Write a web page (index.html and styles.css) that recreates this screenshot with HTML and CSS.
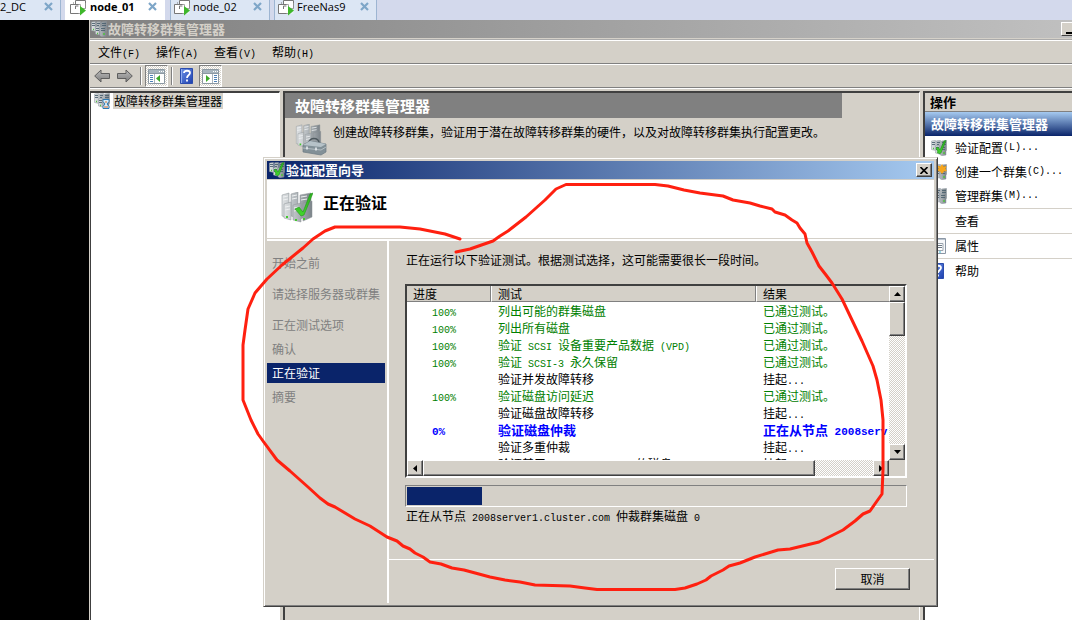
FILE: index.html
```html
<!DOCTYPE html>
<html lang="zh-CN">
<head>
<meta charset="utf-8">
<title>故障转移群集管理器</title>
<link rel="stylesheet" href="styles.css">
</head>
<body>
<svg class="defs" aria-hidden="true">
  <defs>
    <linearGradient id="metal" x1="0" x2="1" y1="0" y2="0"><stop offset="0" stop-color="#dfe2e4"/><stop offset=".5" stop-color="#b0b6ba"/><stop offset="1" stop-color="#7b8389"/></linearGradient>
    <linearGradient id="greenTick" x1="0" x2="0" y1="0" y2="1"><stop offset="0" stop-color="#2fae22"/><stop offset="1" stop-color="#43d62c"/></linearGradient>
    <linearGradient id="blueBook" x1="0" x2="1" y1="0" y2="1"><stop offset="0" stop-color="#6d92e8"/><stop offset="1" stop-color="#1c3fae"/></linearGradient>
    <linearGradient id="arrowFill" x1="0" x2="0" y1="0" y2="1"><stop offset="0" stop-color="#bdbdbd"/><stop offset="1" stop-color="#7c7c7c"/></linearGradient>
    <symbol id="servers" viewBox="0 0 16 16">
      <g fill="url(#metal)" stroke="#8c979e" stroke-width=".5">
        <path d="M.5 1l4-.6v10l-4-.9zM5.500.8l4-.4v10l-4-.6zM10.500 1l5-.6v10l-5 .4z"/>
        <path d="M4.500 6l4-.6V14l-4-1zM9 6l6-.6v9.600l-4 .7-2-1z"/>
      </g>
      <path d="M1 2.500h3M1 4.500h3M6 2.500h3M6 4.500h2M11 2.500h4M11 4.500h4M5 7.500h3M5 9.500h3M10 7.500h4M10 9.500h4" stroke="#4d6270" stroke-width=".9"/>
      <path d="M2 8.500h1M6 12.500h1M12 13h2" stroke="#4fc43d" stroke-width="1.400"/>
    </symbol>
    <symbol id="servers-check" viewBox="0 0 16 16">
      <use href="#servers" width="16" height="16"/>
      <path d="M5 8l2-1 2 3 4-9 2-.6-5 12.600-2 1z" fill="url(#greenTick)" stroke="#168a19" stroke-width=".5"/>
    </symbol>
    <symbol id="servers-large" viewBox="0 0 32 32">
      <g fill="url(#metal)" stroke="#8b9195" stroke-width=".5">
        <path d="M1 3l7-2v25l-7-2zM10 2l7-2v26l-7-2zM19 3l11-2v22l-11 4z"/>
        <path d="M3 12l7-2v18l-7-2zM12 13l8-2v19l-8-2zM22 11l9-2v16l-9 4z"/>
      </g>
      <path d="M2 5l5-1M2 8l5-1M11 4l5-1M11 7l5-1M20 5l6-1M20 8l6-1M4 15l5-1M4 18l5-1M13 16l5-1M13 19l5-1" stroke="#eef0f1"/>
      <path d="M5 25h2M14 28h2M22 27h2" stroke="#43c82f" stroke-width="2"/>
    </symbol>
    <symbol id="vm" viewBox="0 0 16 16">
      <g fill="#fff" stroke="#777" stroke-width="1">
        <path d="M5.500.5h10v8h-10z"/><path d="M.5 4.500h10v9H.5z"/><path d="M3.500 3.500V2.500M5.500 9v-3h3" fill="none"/>
      </g>
      <path d="M8.500 3h7v11h-7z" fill="#fff" opacity=".35"/>
      <path d="M10 6l6 4.500-6 5z" fill="#3eb72b"/>
    </symbol>
    <symbol id="close-x" viewBox="0 0 9 9"><path d="M1 1l7 7M8 1L1 8" stroke="#7ea6c8" stroke-width="2.200"/></symbol>
    <symbol id="help" viewBox="0 0 13 16">
      <path d="M.5.5h12v15H.5z" fill="url(#blueBook)" stroke="#2b4cae"/><path d="M1.500 1v14" stroke="#90adf0"/>
      <path d="M4 5c0-3 6-3 6 0 0 2-3 2-3 5M7 11.500v2" fill="none" stroke="#fff" stroke-width="1.800"/>
    </symbol>
    <symbol id="pane" viewBox="0 0 17 15">
      <path d="M.5.5h16v14H.5z" fill="#fff" stroke="#8c99a3"/><path d="M1 1h15v3H1z" fill="#a8b5be"/><path d="M1 4.500h15" stroke="#8c99a3"/>
      <path d="M11 2.500h1M13 2.500h1M15 2.500h1" stroke="#fff"/>
    </symbol>
  </defs>
</svg>

<nav class="tabs">
  <div class="tab tab-cut"><span>2_DC</span><button class="tab-close" aria-label="关闭 2_DC"><svg><use href="#close-x"/></svg></button></div>
  <div class="tab tab-active"><svg class="vm"><use href="#vm"/></svg><span>node_01</span><button class="tab-close" aria-label="关闭 node_01"><svg><use href="#close-x"/></svg></button></div>
  <div class="tab tab-mid"><svg class="vm"><use href="#vm"/></svg><span>node_02</span><button class="tab-close" aria-label="关闭 node_02"><svg><use href="#close-x"/></svg></button></div>
  <div class="tab tab-last"><svg class="vm"><use href="#vm"/></svg><span>FreeNas9</span><button class="tab-close" aria-label="关闭 FreeNas9"><svg><use href="#close-x"/></svg></button></div>
</nav>

<main class="app">
  <header class="app-title">
    <svg class="i16"><use href="#servers"/></svg>
    <h1>故障转移群集管理器</h1>
    <button class="min" aria-label="最小化"></button>
  </header>
  <nav class="menu">
    <button>文件<span class="lat">(F)</span></button><button>操作<span class="lat">(A)</span></button><button>查看<span class="lat">(V)</span></button><button>帮助<span class="lat">(H)</span></button>
  </nav>
  <div class="toolbar">
    <button class="arrow" aria-label="后退"><svg viewBox="0 0 16 14"><path d="M.7 7L7 1v3.500h8.500v5H7V13z" fill="url(#arrowFill)" stroke="#5e5e5e"/></svg></button>
    <button class="arrow" aria-label="前进"><svg viewBox="0 0 16 14"><path d="M15.300 7L9 1v3.500H.5v5H9V13z" fill="url(#arrowFill)" stroke="#5e5e5e"/></svg></button>
    <i class="sep"></i>
    <button class="pressed" aria-label="控制台树"><svg viewBox="0 0 17 15"><use href="#pane" width="17" height="15"/><path d="M6.500 5v9" stroke="#a9b4bd"/><path d="M2 6.500h3M2 8.500h3M2 10.500h3M2 12.500h3" stroke="#4f82b7"/><path d="M12 6v7L8 9.500z" fill="#3da928"/></svg></button>
    <i class="sep"></i>
    <button class="help" aria-label="帮助"><svg><use href="#help"/></svg></button>
    <button class="pressed" aria-label="操作窗格"><svg viewBox="0 0 17 15"><use href="#pane" width="17" height="15"/><path d="M10.500 5v9" stroke="#a9b4bd"/><path d="M12 6.500h3M12 8.500h3M12 10.500h3M12 12.500h3" stroke="#4f82b7"/><path d="M4 6v7l4-3.500z" fill="#3da928"/></svg></button>
  </div>

  <div class="panes">
    <aside class="tree pane">
      <div class="tree-item"><svg class="i16" viewBox="0 0 16 16"><use href="#servers" width="16" height="16"/><path d="M9 6.500h6v2l-2 2.500 2 2.500v2H9v-2l2-2.500-2-2.500z" fill="#d9eefa" stroke="#2e7bb5"/><path d="M11 9h2M10 14h4" stroke="#d26d31"/></svg><span>故障转移群集管理器</span></div>
    </aside>
    <section class="content pane">
      <h2>故障转移群集管理器</h2>
      <div class="intro">
        <svg class="i32" viewBox="0 0 32 32"><use href="#servers-large" width="27" height="26"/><path d="M14 19c0-6 10-6 10 0" fill="none" stroke="#4d585e" stroke-width="1.600"/><path d="M8 21l7-4 16 3v8l-5 3-18-3z" fill="#829097" stroke="#6b7a82" stroke-width=".7"/><path d="M8 21l7-4 16 3-5 3z" fill="#b6c2c8"/><path d="M8 24l18 2 5-3" fill="none" stroke="#c3cccf" stroke-width=".8"/><path d="M12 22.500v3M21 23.500v3" stroke="#e7ecef" stroke-width="1.600"/></svg>
        <p>创建故障转移群集，验证用于潜在故障转移群集的硬件，以及对故障转移群集执行配置更改。</p>
      </div>
    </section>
    <aside class="actions pane">
      <h2>操作</h2>
      <h3>故障转移群集管理器</h3>
      <div class="group">
        <button><svg class="i16"><use href="#servers-check"/></svg>验证配置<span class="lat">(L)...</span></button>
        <button><svg class="i16" viewBox="0 0 16 16"><use href="#servers" width="16" height="16"/><path d="M11 0l1.500 2.500L15.500 2l-1 3 1.500 2-3 .5L11 10 9 7.500 6 7l1.500-2.500-1-3 3 1z" fill="#f6a51c"/></svg>创建一个群集<span class="lat">(C)...</span></button>
        <button><svg class="i16"><use href="#servers"/></svg>管理群集<span class="lat">(M)...</span></button>
      </div>
      <div class="group"><button><span class="i16"></span>查看</button></div>
      <div class="group"><button><svg class="i16" viewBox="0 0 16 16"><path d="M2 .5h12.500v15H2z" fill="#f7f8fa" stroke="#8b97a5"/><path d="M2 1.500h12" stroke="#b9c3ce"/><path d="M6 5.500h6v7H6z" fill="#fff" stroke="#9aa4ae"/><path d="M7 7.500h4M7 9.500h4" stroke="#6c7884"/><path d="M8 14h2" stroke="#35bcd5"/></svg>属性</button></div>
      <div class="group"><button><svg class="i16 book"><use href="#help"/></svg>帮助</button></div>
    </aside>
  </div>
</main>

<section class="dialog" role="dialog" aria-labelledby="dlg-title">
  <header class="dlg-title">
    <svg class="i16"><use href="#servers-check"/></svg>
    <h2 id="dlg-title">验证配置向导</h2>
    <button class="dlg-close" aria-label="关闭"><svg viewBox="0 0 8 7"><path d="M.5 0l7 7M7.500 0l-7 7" stroke="#000" stroke-width="1.600"/></svg></button>
  </header>
  <div class="dlg-head">
    <svg class="i32" viewBox="0 0 32 32"><use href="#servers-large" width="32" height="32"/><path d="M14 17l4-2 4 5L29 2l3-1-9 22-3 1z" fill="url(#greenTick)" stroke="#23971b" stroke-width=".6"/></svg>
    <h3>正在验证</h3>
  </div>
  <div class="dlg-body">
    <ol class="steps">
      <li class="wide">开始之前</li>
      <li class="wide">请选择服务器或群集</li>
      <li>正在测试选项</li>
      <li>确认</li>
      <li class="current" aria-current="step">正在验证</li>
      <li>摘要</li>
    </ol>
    <div class="page">
      <div class="page-main">
        <p>正在运行以下验证测试。根据测试选择，这可能需要很长一段时间。</p>
        <div class="list">
          <div class="list-view">
            <table>
              <colgroup><col class="c-progress"><col class="c-test"><col class="c-result"></colgroup>
              <thead><tr><th>进度</th><th>测试</th><th>结果</th></tr></thead>
              <tbody>
                <tr class="ok"><td><span class="lat">100%</span></td><td>列出可能的群集磁盘</td><td>已通过测试。</td></tr>
                <tr class="ok"><td><span class="lat">100%</span></td><td>列出所有磁盘</td><td>已通过测试。</td></tr>
                <tr class="ok"><td><span class="lat">100%</span></td><td>验证<span class="lat"> SCSI </span>设备重要产品数据<span class="lat"> (VPD)</span></td><td>已通过测试。</td></tr>
                <tr class="ok"><td><span class="lat">100%</span></td><td>验证<span class="lat"> SCSI-3 </span>永久保留</td><td>已通过测试。</td></tr>
                <tr><td></td><td>验证并发故障转移</td><td>挂起<span class="lat">...</span></td></tr>
                <tr class="ok"><td><span class="lat">100%</span></td><td>验证磁盘访问延迟</td><td>已通过测试。</td></tr>
                <tr><td></td><td>验证磁盘故障转移</td><td>挂起<span class="lat">...</span></td></tr>
                <tr class="run"><td><span class="lat">0%</span></td><td>验证磁盘仲裁</td><td>正在从节点<span class="lat"> 2008serv</span></td></tr>
                <tr><td></td><td>验证多重仲裁</td><td>挂起<span class="lat">...</span></td></tr>
                <tr><td></td><td>验证基于<span class="lat"> Windows&nbsp;&nbsp;NTFS </span>的磁盘</td><td>挂起<span class="lat">...</span></td></tr>
              </tbody>
            </table>
          </div>
          <div class="vbar">
            <button aria-label="向上滚动"><svg viewBox="0 0 7 4"><path d="M0 4l3.500-4L7 4z"/></svg></button>
            <div class="track"><div class="thumb"></div></div>
            <button aria-label="向下滚动"><svg viewBox="0 0 7 4"><path d="M0 0l3.500 4L7 0z"/></svg></button>
          </div>
          <div class="hbar">
            <button aria-label="向左滚动"><svg class="side" viewBox="0 0 4 7"><path d="M4 0L0 3.500 4 7z"/></svg></button>
            <div class="track"><div class="thumb"></div></div>
            <button aria-label="向右滚动"><svg class="side" viewBox="0 0 4 7"><path d="M0 0l4 3.500L0 7z"/></svg></button>
          </div>
        </div>
        <progress value="15" max="100" aria-label="验证进度"></progress>
        <p class="status">正在从节点<span class="lat"> 2008server1.cluster.com </span>仲裁群集磁盘<span class="lat"> 0</span></p>
      </div>
      <footer><button class="cancel">取消</button></footer>
    </div>
  </div>
</section>

<svg class="mark" width="680" height="430" viewBox="230 170 680 430" aria-hidden="true">
  <path d="M460 239L445 234 420 229 400 227H335L325 231 313 239 303 248 282 265 267 279 255 293 248 309 245 330 243 345V400L251 420 258 434 263 441 277 460 290 471 308 487 320 498 328 504 335 507 355 519 370 526 387 537 397 541 403 546 410 549 415 553 423 557 430 562 441 564 452 568 464 570 490 577 505 580 520 582 535 585 570 586 585 588 597 589.500H675L685 588 697 584 706 580 711 576 723 570 729 566 740 563 755 557 778 550 790 549 819 542 833 535 843 530 855 521 863 514 870 511 877 501 882 494 883 470V420L881 400 877 380 873 366 862 341 852 320 842 299 832 283 826 275 819 266 812 252 807 243 805 234 800 228 797 223 792 220 785 215 775 212 772 209 760 206 750 203 733 200 723 196 700 193 684 190 668 186 655 184.500H566L556 189 545 200 526 217 508 231 500 236 493 241 470 249 456 252"/>
</svg>
</body>
</html>
```
FILE: styles.css
```css
* { box-sizing: border-box; }

body {
  --face: #d4d0c8;
  --navy: #0a246a;
  position: relative;
  display: flex;
  flex-direction: column;
  min-height: 100vh;
  margin: 0;
  overflow: hidden;
  background: #000;
  color: #000;
  font: 12px/20px "Noto Sans CJK SC", sans-serif;
}

h1, h2, h3, p, ol { margin: 0; padding: 0; list-style: none; }
button { margin: 0; padding: 0; border: 0; background: none; color: inherit; font: inherit; white-space: nowrap; }
svg { display: block; flex: none; }
.defs { position: absolute; width: 0; height: 0; }
.lat { font-family: "Liberation Mono", monospace; font-size: 10px; line-height: 10px; white-space: pre; }
.i16 { width: 16px; height: 16px; flex: none; }
.i32 { width: 32px; height: 32px; }

/* Virtual machine tabs */
.tabs { display: flex; gap: 4px; height: 20px; background: #d3d9ec; font: 11px/14px "Open Sans", sans-serif; overflow: hidden; }
.tab { display: flex; align-items: flex-start; background: #dce6f4; border-right: 1px solid #9db5d2; white-space: nowrap; }
.tab + .tab { border-left: 1px solid #9db5d2; padding-left: 3px; }
.tab .vm { width: 16px; height: 16px; margin-right: 3px; }
.tab span { flex: 1; }
.tab-cut { width: 61px; }
.tab-active { width: 100px; margin-right: 1px; background: #fff; font-weight: 700; }
.tab.tab-active { padding-left: 4px; border-color: #fff; }
.tab-active .vm { margin-right: 4px; }
.tab-mid { width: 100px; }
.tab-last { width: 103px; }
.tab-close { margin: 2px 7px 0 0; }
.tab-close svg { width: 9px; height: 9px; }

/* Management console */
.app { display: flex; flex: 1; flex-direction: column; margin-left: 89px; padding-left: 1px; overflow: hidden; background: var(--face); }
.app-title { display: flex; align-items: center; height: 18px; padding-left: 1px; background: linear-gradient(90deg, #808080, #c0c0c0); color: var(--face); }
.app-title h1 { flex: 1; padding-left: 1px; font-size: 13px; line-height: 18px; }
.min { width: 16px; height: 14px; margin-right: -5px; background: linear-gradient(#000, #000) 4px 9px / 6px 2px no-repeat var(--face); border: 1px solid; border-color: #fff #404040 #404040 #fff; }
.menu, .toolbar { display: flex; height: 24px; border-top: 1px solid #fff; border-bottom: 1px solid #808080; }
.menu { margin-top: 1px; border-top: 2px groove #fff; }
.menu { height: 25px; }
.menu button { padding: 0 8px; }
.toolbar { align-items: center; padding-left: 4px; }
.arrow { width: 16px; height: 14px; margin-right: 7px; }
.sep { width: 1px; height: 18px; margin: 0 4px 0 0; background: #808080; box-shadow: 1px 0 #fff; }
.pressed { display: grid; place-items: center; width: 23px; height: 22px; margin-right: 3px; border: 1px solid; border-color: #808080 #fff #fff #808080; background: repeating-conic-gradient(#fff 0 25%, var(--face) 0 50%) 0 0 / 2px 2px; }
.pressed svg { width: 17px; height: 15px; }
.help { margin: 0 6px 0 4px; }
.help svg { width: 13px; height: 16px; }
.panes { display: flex; flex: 1; gap: 3px; padding-top: 2px; border-top: 1px solid #fff; }
.pane { border-style: solid; border-width: 2px 1px 0 2px; border-color: #404040 #fff #fff #404040; }
.tree { flex: 0 0 190px; border-left-width: 1px; background: #fff; }
.tree-item { display: flex; align-items: center; gap: 3px; padding-left: 3px; line-height: 16px; }
.tree-item span { padding: 0 1px; background: var(--face); }
.content { flex: 1; min-width: 0; }
.content h2 { margin-right: 77px; padding-left: 10px; background: #808080; color: #fff; font-size: 15px; line-height: 25px; }
.intro { display: flex; gap: 6px; padding: 6px 0 0 10px; white-space: nowrap; }
.intro p { line-height: 16px; }
.actions { flex: 0 0 149px; border-right: 0; background: #fff; overflow: hidden; }
.actions h2 { padding-left: 5px; border-bottom: 1px solid #808080; background: var(--face); font-size: 13px; line-height: 18px; }
.actions h3 { padding-left: 6px; background: linear-gradient(#a6caf0, var(--navy)); color: #fff; font-size: 13px; line-height: 24px; }
.group + .group { border-top: 1px solid var(--face); }
.group button { display: flex; align-items: center; width: 100%; height: 24px; padding-left: 6px; }
.group .i16 { margin-right: 8px; }
.group .book { width: 13px; margin-right: 11px; }

/* Wizard window */
.dialog { position: absolute; top: 157px; left: 263px; width: 675px; padding: 3px; border: 1px solid; border-color: var(--face) #404040 #404040 var(--face); background: var(--face); box-shadow: inset 1px 1px #fff, inset -1px -1px #808080; }
.dlg-title { display: flex; align-items: center; height: 18px; margin-bottom: 1px; padding: 0 2px; background: linear-gradient(90deg, var(--navy), #a6caf0); color: #fff; }
.dlg-title h2 { flex: 1; padding-left: 1px; font-size: 13px; line-height: 18px; }
.dlg-close { display: grid; place-items: center; width: 16px; height: 14px; background: var(--face); }
.dlg-close svg { width: 8px; height: 7px; }
.dlg-close, .vbar button, .hbar button, .thumb, .cancel { border: 1px solid; border-color: #fff #404040 #404040 #fff; box-shadow: inset -1px -1px #808080; background-color: var(--face); }
.dlg-head { display: flex; gap: 10px; height: 61px; padding: 12px 14px; background: linear-gradient(var(--face), var(--face)) 0 58px / 100% 1px no-repeat #fff; }
.dlg-head h3 { font-size: 16px; line-height: 20px; }
.dlg-body { display: flex; min-height: 362px; }
.steps { flex: 0 0 122px; padding: 12px 2px 0 0; border-right: 2px solid #fff; color: #808080; }
.steps li { margin-bottom: 4px; padding-left: 5px; }
.steps .wide { margin-bottom: 11px; }
.steps .current { background: var(--navy); color: #fff; }
.page { display: flex; flex: 1; flex-direction: column; min-width: 0; }
.page-main { flex: 1; padding: 9px 27px 0 16px; }
.page-main p { padding-left: 1px; }
.list { display: grid; grid-template-columns: 1fr 16px; grid-template-rows: 174px 16px; margin-top: 14px; border: 2px solid; border-color: #404040 #fff #fff #404040; }
.list-view { overflow: hidden; background: #fff; }
.list table { width: 100%; table-layout: fixed; border-collapse: separate; border-spacing: 0; line-height: 17px; }
.c-progress { width: 84px; }
.c-test { width: 265px; }
.list th { height: 16px; padding: 0 6px; border: solid #808080; border-width: 0 1px 1px 0; background: var(--face); font-weight: 400; line-height: 15px; text-align: left; }
.list th + th { border-left: 1px solid #fff; }
.list th:last-child { border-right: 0; }
.list td { height: 17px; padding: 0 0 0 7px; white-space: nowrap; line-height: 17px; }
.list td:first-child { padding-left: 25px; }
.ok { color: #008000; }
.run { color: #00f; font-size: 13px; font-weight: 700; }
.run .lat { font-size: 11px; }
.vbar, .hbar { display: flex; min-width: 0; }
.vbar { flex-direction: column; }
.vbar button, .hbar button { display: grid; place-items: center; flex: none; width: 16px; height: 16px; }
.vbar svg { width: 7px; height: 4px; }
.hbar svg { width: 4px; height: 7px; }
.track { flex: 1; background: repeating-conic-gradient(#fff 0 25%, var(--face) 0 50%) 0 0 / 2px 2px; }
.vbar .thumb { height: 34px; }
.hbar .thumb { width: 87%; height: 16px; }
progress { display: block; width: 100%; height: 22px; margin-top: 7px; padding: 1px; border: 1px solid; border-color: #808080 #fff #fff #808080; appearance: none; background: var(--face); }
progress::-webkit-progress-bar { background: var(--face); }
progress::-webkit-progress-value { background: var(--navy); }
.page .status { line-height: 17px; }
.page footer { display: flex; justify-content: flex-end; padding: 8px 24px 13px; border-top: 1px solid #fff; }
.cancel { width: 75px; height: 22px; line-height: 18px; }

/* Freehand annotation */
.mark { position: absolute; top: 170px; left: 230px; pointer-events: none; }
.mark path { fill: none; stroke: #ff2010; stroke-width: 3; stroke-linecap: round; stroke-linejoin: round; }
```
